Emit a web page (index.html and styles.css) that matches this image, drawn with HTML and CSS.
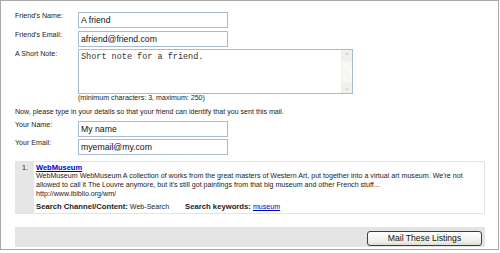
FILE: index.html
```html
<!DOCTYPE html>
<html lang="en">
<head>
    <meta charset="UTF-8">
    <title>Mail These Listings</title>
    <link rel="stylesheet" href="styles.css">
</head>
<body>
    <div class="panel">
        <div class="form-grid">
            <label class="field-label">Friend's Name:</label>
            <input class="text-input" type="text" value="A friend">
            <label class="field-label">Friend's Email:</label>
            <input class="text-input" type="text" value="afriend@friend.com">
            <label class="field-label">A Short Note:</label>
            <div class="note-cell">
                <div class="note-box">
                    <textarea class="note-text">Short note for a friend.</textarea>
                    <div class="scrollbar">
                        <span class="scroll-btn">&#8963;</span>
                        <span class="scroll-track"></span>
                        <span class="scroll-btn">&#8964;</span>
                    </div>
                </div>
                <p class="hint">(minimum characters: 3, maximum: 250)</p>
            </div>
        </div>

        <p class="intro">Now, please type in your details so that your friend can identify that you sent this mail.</p>

        <div class="form-grid sender">
            <label class="field-label">Your Name:</label>
            <input class="text-input" type="text" value="My name">
            <label class="field-label">Your Email:</label>
            <input class="text-input" type="text" value="myemail@my.com">
        </div>

        <ol class="listings">
            <li class="listing">
                <div class="listing-num">1.</div>
                <div class="listing-body">
                    <a href="#" class="listing-title">WebMuseum</a>
                    <p class="listing-desc">WebMuseum WebMuseum A collection of works from the great masters of Western Art, put together into a virtual art museum. We're not allowed to call it The Louvre anymore, but it's still got paintings from that big museum and other French stuff...</p>
                    <p class="listing-url">http://www.ibiblio.org/wm/</p>
                    <p class="listing-meta">
                        <b>Search Channel/Content:</b> Web-Search
                        <span class="meta-gap"></span>
                        <b>Search keywords:</b> <a href="#">museum</a>
                    </p>
                </div>
            </li>
        </ol>

        <div class="actions">
            <button class="mail-button">Mail These Listings</button>
        </div>
    </div>
</body>
</html>
```

FILE: styles.css
```css
:root {
    --text-color: #222;
    --input-border: #a9bccf;
    --link-color: #0000cc;
    --panel-border: #a8a8a8;
    --bar-bg: #e4e4e4;
}

* {
    margin: 0;
    padding: 0;
    box-sizing: border-box;
}

body {
    font-family: 'Liberation Sans', Arial, sans-serif;
    font-size: 7.1px;
    line-height: 9px;
    color: var(--text-color);
    background: #fff;
}

.panel {
    width: 499px;
    height: 250px;
    border: 1px solid var(--panel-border);
    padding: 11px 13px 0 14px;
}

.form-grid {
    display: grid;
    grid-template-columns: 63px 150px;
    row-gap: 3px;
    align-items: start;
}

.field-label {
    line-height: 9px;
}

.text-input {
    width: 150px;
    height: 16px;
    border: 1px solid var(--input-border);
    padding: 0 2px;
    font-family: 'Liberation Sans', Arial, sans-serif;
    font-size: 8.7px;
    color: #111;
    background: #fff;
    outline: none;
}

.note-cell {
    grid-column: 2;
    width: 275px;
    margin-top: -1px;
}

.note-box {
    display: flex;
    height: 45px;
    border: 1px solid var(--input-border);
    background: #fff;
}

.note-text {
    flex: 1;
    border: none;
    resize: none;
    outline: none;
    padding: 2px 2px;
    font-family: 'Liberation Mono', 'Courier New', monospace;
    font-size: 8.5px;
    line-height: 10px;
    color: #333;
    overflow: hidden;
}

.scrollbar {
    width: 11px;
    display: flex;
    flex-direction: column;
    background: #f8f8f4;
    border-left: 1px solid #eeeeea;
}

.scroll-btn {
    height: 11px;
    font-size: 7px;
    line-height: 11px;
    text-align: center;
    color: #b8b8b0;
    background: #f1f1ec;
}

.scroll-track {
    flex: 1;
    background: repeating-linear-gradient(45deg, #fbfbf8 0 1px, #f2f2ee 1px 2px);
}

.intro {
    margin-top: 5px;
}

.sender {
    margin-top: 4px;
    row-gap: 2px;
}

.listings {
    list-style: none;
    margin-top: 6px;
}

.listing {
    display: flex;
    height: 53px;
    border: 1px solid #e4e4e4;
}

.listing-num {
    width: 18px;
    background: #e6e6e6;
    text-align: right;
    padding: 2px 6px 0 0;
}

.listing-body {
    flex: 1;
    padding: 1px 4px 0 2px;
}

.listing-title {
    display: block;
    font-weight: bold;
    font-size: 7.5px;
    color: var(--link-color);
}

.listing-meta {
    margin-top: 3px;
}

.listing-meta b {
    font-size: 7.7px;
    color: #222;
}

.listing-meta a {
    color: var(--link-color);
}

.meta-gap {
    display: inline-block;
    width: 12px;
}

.actions {
    margin-top: 13px;
    height: 20px;
    background: var(--bar-bg);
    display: flex;
    justify-content: flex-end;
    padding: 4px 3px 0 0;
}

.mail-button {
    width: 115px;
    height: 15px;
    border: 1px solid #1f3f7f;
    border-radius: 3px;
    background: linear-gradient(#ffffff, #f0f0ea 70%, #dcdcd4);
    font-family: 'Liberation Sans', Arial, sans-serif;
    font-size: 8.6px;
    line-height: 13px;
    color: #111;
}
```
